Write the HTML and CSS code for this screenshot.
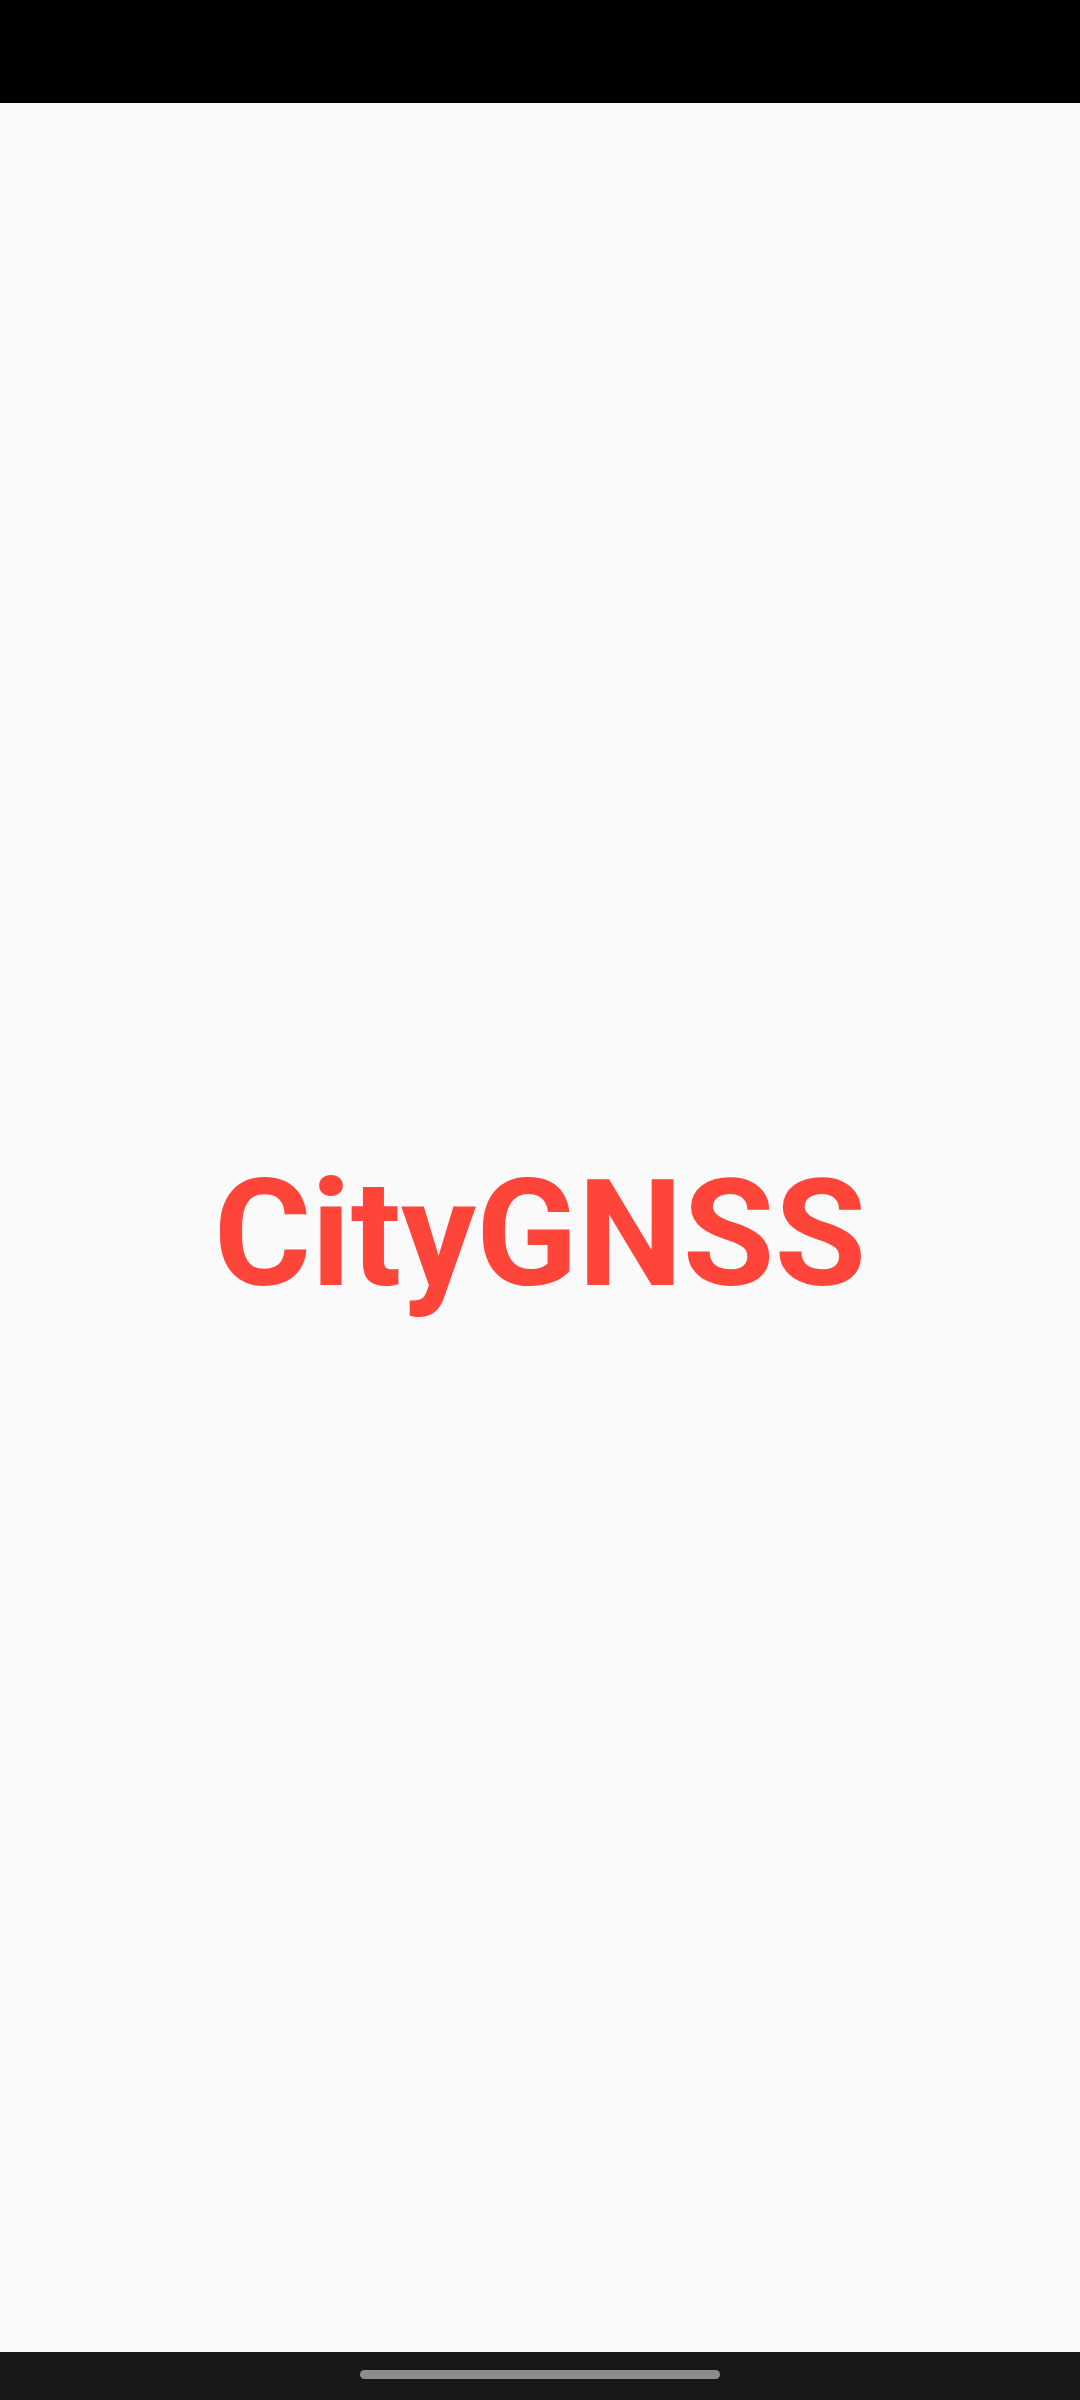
FILE: index.html
```html
<!DOCTYPE html>
<html>
<head>
<meta charset="utf-8">
<link rel="stylesheet" href="styles.css">
</head>
<body>
<div class="screen">
  <div class="status-bar"></div>
  <main class="content">
    <h1 class="logo">CityGNSS</h1>
  </main>
  <div class="nav-bar"><div class="handle"></div></div>
</div>
</body>
</html>
```
FILE: styles.css
```css
html, body {
  margin: 0;
  padding: 0;
  width: 1080px;
  height: 2400px;
  overflow: hidden;
  background: #fafafa;
}
.screen {
  display: flex;
  flex-direction: column;
  width: 1080px;
  height: 2400px;
}
.status-bar {
  height: 103px;
  background: #000;
  flex: none;
}
.content {
  flex: 1;
  display: flex;
  align-items: center;
  justify-content: center;
  background: #fafafa;
}
.logo {
  margin: 0;
  font-family: Roboto, "Liberation Sans", sans-serif;
  font-weight: 700;
  font-size: 149px;
  line-height: 1;
  color: #ff453a;
  padding-top: 14px;
}
.nav-bar {
  height: 48px;
  background: #181818;
  flex: none;
  display: flex;
  justify-content: center;
  padding-top: 18px;
  box-sizing: border-box;
}
.handle {
  width: 360px;
  height: 9px;
  border-radius: 5px;
  background: #8c8c8c;
}
```
